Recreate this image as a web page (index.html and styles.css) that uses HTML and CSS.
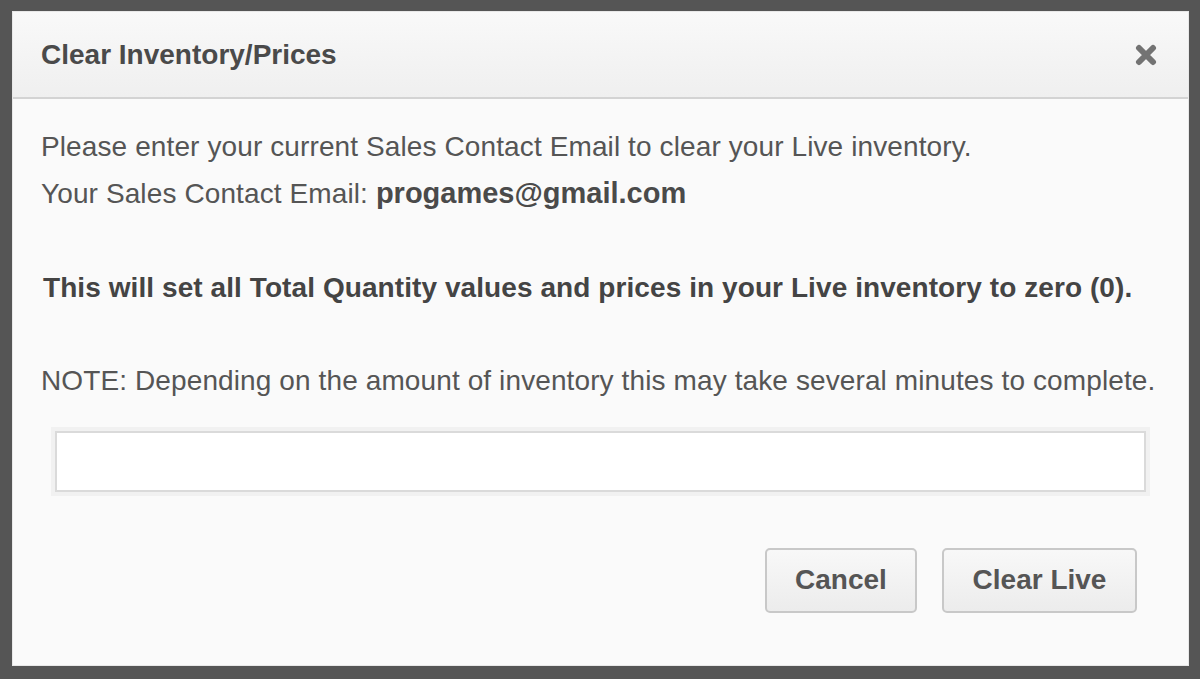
FILE: index.html
```html
<!DOCTYPE html>
<html>
<head>
<meta charset="utf-8">
<link rel="stylesheet" href="styles.css">
</head>
<body>
<div class="modal">
  <div class="modal-header">
    <h1 class="title">Clear Inventory/Prices</h1>
    <svg class="close" width="22" height="22" viewBox="0 0 22 22" aria-label="close">
      <path d="M4 4 L18 18 M18 4 L4 18" stroke="#737373" stroke-width="6" stroke-linecap="round" fill="none"/>
    </svg>
  </div>
  <div class="modal-body">
    <p class="line">Please enter your current Sales Contact Email to clear your Live inventory.</p>
    <p class="line">Your Sales Contact Email: <b class="email">progames@gmail.com</b></p>
    <p class="warn">This will set all Total Quantity values and prices in your Live inventory to zero (0).</p>
    <p class="note">NOTE: Depending on the amount of inventory this may take several minutes to complete.</p>
    <div class="input-wrap"><input class="input" type="text"></div>
    <div class="actions">
      <button class="btn cancel">Cancel</button>
      <button class="btn clear">Clear Live</button>
    </div>
  </div>
</div>
</body>
</html>
```
FILE: styles.css
```css
html, body {
  margin: 0;
  padding: 0;
  background: #555555;
  height: 679px;
  overflow: hidden;
}
body {
  padding: 11px 11px 0 12px;
  box-sizing: border-box;
  font-family: "Liberation Sans", Arial, sans-serif;
}
.modal {
  background: #fafafa;
  height: 655px;
  border: 1px solid #e8e8e8;
  box-sizing: border-box;
  display: flex;
  flex-direction: column;
}
.modal-header {
  height: 85px;
  background: linear-gradient(#f9f9f9, #efefef);
  border-bottom: 2px solid #d3d3d3;
  display: flex;
  align-items: center;
  justify-content: space-between;
  padding: 0 31px 0 28px;
  flex-shrink: 0;
}
.title {
  margin: 0;
  font-size: 28px;
  font-weight: bold;
  color: #4a4a4a;
}
.close {
  display: block;
  filter: blur(0.6px);
}
.modal-body {
  padding: 25px 28px 0 28px;
  color: #555;
  font-size: 28px;
  letter-spacing: 0.11px;
}
.line {
  margin: 0;
  line-height: 46px;
}
.email {
  color: #4a4a4a;
  font-size: 29px;
  letter-spacing: 0;
}
.warn {
  margin: 48px 0 0 2px;
  line-height: 46px;
  font-weight: bold;
  color: #444;
  letter-spacing: 0.08px;
}
.note {
  margin: 47px 0 0 0;
  line-height: 46px;
}
.input-wrap {
  margin: 23px 10px 0 10px;
  padding: 4px;
  background: #f1f1f1;
}
.input {
  display: block;
  width: 100%;
  box-sizing: border-box;
  height: 61px;
  border: 2px solid #dadada;
  background: #fff;
}
.actions {
  display: flex;
  justify-content: flex-end;
  gap: 25px;
  margin: 52px 23px 0 0;
}
.btn {
  font-family: "Liberation Sans", Arial, sans-serif;
  font-size: 28px;
  font-weight: bold;
  color: #555;
  height: 65px;
  padding: 0 0 2px 0;
  background: linear-gradient(#f8f8f8, #ececec);
  border: 2px solid #c8c8c8;
  border-radius: 5px;
  letter-spacing: 0;
}
.cancel { width: 152px; }
.clear { width: 195px; }
```
